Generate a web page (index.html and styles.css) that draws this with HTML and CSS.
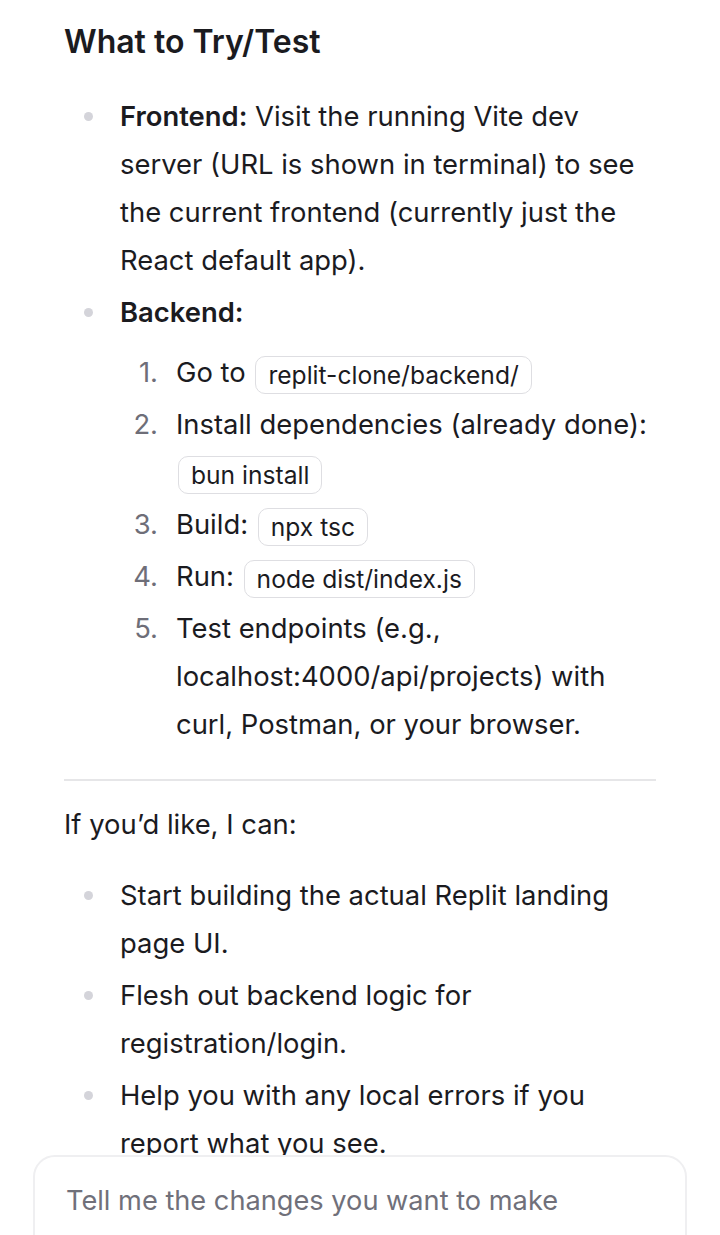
FILE: index.html
```html
<!DOCTYPE html>
<html lang="en">
<head>
<meta charset="utf-8">
<link rel="stylesheet" href="styles.css">
</head>
<body>
<main class="msg">
  <h3 class="title">What to Try/Test</h3>
  <ul class="bullets">
    <li><strong>Frontend:</strong> Visit the running Vite dev server (URL is shown in terminal) to see the current frontend (currently just the React default app).</li>
    <li><strong>Backend:</strong>
      <ol class="steps">
        <li>Go to <code class="pill">replit-clone/backend/</code></li>
        <li>Install dependencies (already done): <code class="pill">bun install</code></li>
        <li>Build: <code class="pill">npx tsc</code></li>
        <li>Run: <code class="pill">node dist/index.js</code></li>
        <li>Test endpoints (e.g., localhost:4000/api/projects) with curl, Postman, or your browser.</li>
      </ol>
    </li>
  </ul>
  <hr class="rule">
  <p class="para">If you’d like, I can:</p>
  <ul class="bullets">
    <li>Start building the actual Replit landing page UI.</li>
    <li>Flesh out backend logic for registration/login.</li>
    <li>Help you with any local errors if you report what you see.</li>
  </ul>
</main>
<div class="composer">
  <div class="placeholder">Tell me the changes you want to make</div>
</div>
</body>
</html>
```
FILE: styles.css
```css
html, body {
  margin: 0;
  padding: 0;
  background: #ffffff;
}
body {
  font-family: "Inter", "Noto Sans", sans-serif;
  color: #1b1b1f;
  font-size: 27.4px;
  line-height: 48px;
  overflow: hidden;
  height: 1235px;
}
.msg {
  padding: 22px 64px 0 64px;
}
.title {
  margin: 0;
  font-size: 32px;
  line-height: 40px;
  font-weight: 600;
}
.bullets {
  list-style: none;
  margin: 30px 0 0 0;
  padding: 0 0 0 56px;
}
.bullets > li {
  position: relative;
  margin-bottom: 4px;
}
.bullets > li::before {
  content: "";
  position: absolute;
  left: -36px;
  top: 20px;
  width: 9px;
  height: 9px;
  border-radius: 50%;
  background: #d4d4da;
}
.bullets strong {
  font-weight: 600;
}
.steps {
  list-style: none;
  margin: 12px 0 0 0;
  padding: 0 0 0 56px;
  counter-reset: step;
}
.steps > li {
  position: relative;
  counter-increment: step;
  margin-bottom: 4px;
}
.steps > li::before {
  content: counter(step) ".";
  position: absolute;
  left: -56px;
  width: 38px;
  text-align: right;
  color: #6e6e78;
}
.pill {
  font-family: inherit;
  font-size: 24.6px;
  line-height: 36px;
  display: inline-block;
  padding: 0 12px;
  margin-left: 2px;
  border: 1.5px solid #dedee2;
  border-radius: 10px;
  vertical-align: middle;
}
.rule {
  border: 0;
  border-top: 2px solid #e6e6e8;
  margin: 31px 0 0 0;
}
.para {
  margin: 19px 0 0 0;
}
.para + .bullets {
  margin-top: 23px;
}
.composer {
  position: fixed;
  left: 33px;
  right: 33px;
  top: 1155px;
  height: 120px;
  background: #ffffff;
  border: 2px solid #efeff1;
  border-radius: 22px;
  box-sizing: border-box;
  padding: 25px 0 0 31px;
}
.placeholder {
  color: #70707a;
  font-size: 27.2px;
  line-height: 38px;
}
```
